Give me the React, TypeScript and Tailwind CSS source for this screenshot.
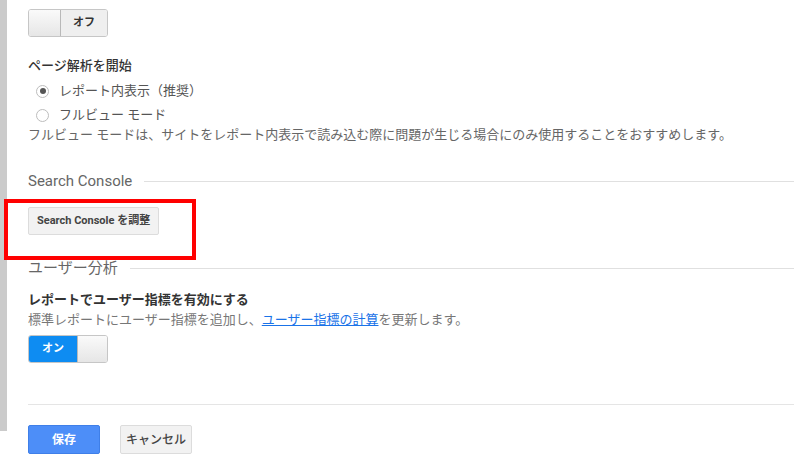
import React from 'react';

const font = { fontFamily: 'Roboto, "Noto Sans CJK JP", "Noto Sans", sans-serif' };

const Toggle = ({ on }: { on: boolean }) => (
  <div className="flex w-[80px] h-[28px] rounded-[3px] border border-[#c6c6c6] overflow-hidden">
    {on ? (
      <>
        <div className="w-[48px] flex items-center justify-center bg-[#0e8cf2] text-white text-[11px] font-bold">
          オン
        </div>
        <div className="flex-1 bg-gradient-to-b from-[#fafafa] to-[#e6e6e6] border-l border-[#b9b9b9]" />
      </>
    ) : (
      <>
        <div className="w-[32px] bg-gradient-to-b from-[#fafafa] to-[#e6e6e6] border-r border-[#b9b9b9]" />
        <div className="flex-1 flex items-center justify-center bg-[#efefef] text-[#333] text-[11px] font-bold">
          オフ
        </div>
      </>
    )}
  </div>
);

const Radio = ({ checked, label }: { checked: boolean; label: string }) => (
  <div className="flex items-center h-[24px] pl-[8px] gap-[10px]">
    <span className="w-[13px] h-[13px] rounded-full border border-[#bdbdbd] flex items-center justify-center bg-white">
      {checked && <span className="w-[6px] h-[6px] rounded-full bg-[#555]" />}
    </span>
    <span className="text-[13px] text-[#555]">{label}</span>
  </div>
);

const SectionTitle = ({ title }: { title: string }) => (
  <div className="flex items-center h-[20px] gap-[12px]">
    <span className="text-[15px] text-[#666] whitespace-nowrap">{title}</span>
    <div className="flex-1 h-px bg-[#e0e0e0]" />
  </div>
);

export default function App() {
  return (
    <div className="relative w-[794px] h-[459px] bg-white overflow-hidden flex" style={font}>
      <div className="w-[7px] h-[431px] bg-[#cbcbcb] shrink-0" />
      <div className="flex-1 flex flex-col pl-[21px] pt-[9px]">
        <Toggle on={false} />
        <div className="mt-[19px] h-[20px] flex items-center text-[13px] text-[#333] font-medium">
          ページ解析を開始
        </div>
        <div className="mt-[3px]">
          <Radio checked label="レポート内表示（推奨）" />
          <Radio checked={false} label="フルビュー モード" />
        </div>
        <div className="h-[16px] flex items-center text-[13px] text-[#666] whitespace-nowrap">
          フルビュー モードは、サイトをレポート内表示で読み込む際に問題が生じる場合にのみ使用することをおすすめします。
        </div>
        <div className="mt-[28px]">
          <SectionTitle title="Search Console" />
        </div>
        <div className="mt-[16px]">
          <button className="h-[28px] px-[8px] rounded-[2px] border border-[#dcdcdc] bg-[#f2f2f2] text-[11px] font-bold text-[#444]">
            Search Console を調整
          </button>
        </div>
        <div className="mt-[23px]">
          <SectionTitle title="ユーザー分析" />
        </div>
        <div className="mt-[11px] h-[20px] flex items-center text-[13px] font-bold text-[#333]">
          レポートでユーザー指標を有効にする
        </div>
        <div className="h-[20px] flex items-center text-[13px] text-[#777]">
          標準レポートにユーザー指標を追加し、
          <a className="text-[#1a73e8] underline">ユーザー指標の計算</a>
          を更新します。
        </div>
        <div className="mt-[6px]">
          <Toggle on />
        </div>
        <div className="mt-[41px] h-px bg-[#e5e5e5]" />
        <div className="mt-[20px] flex gap-[20px]">
          <button className="w-[72px] h-[29px] rounded-[2px] bg-[#4d8ef8] border border-[#3f7fe8] text-white text-[12px] font-bold">
            保存
          </button>
          <button className="w-[72px] h-[29px] rounded-[2px] bg-[#f2f2f2] border border-[#dcdcdc] text-[#444] text-[12px] font-medium">
            キャンセル
          </button>
        </div>
      </div>
      <div className="absolute left-[4px] top-[199px] w-[192px] h-[61px] border-[4px] border-[#ff0000]" />
    </div>
  );
}
